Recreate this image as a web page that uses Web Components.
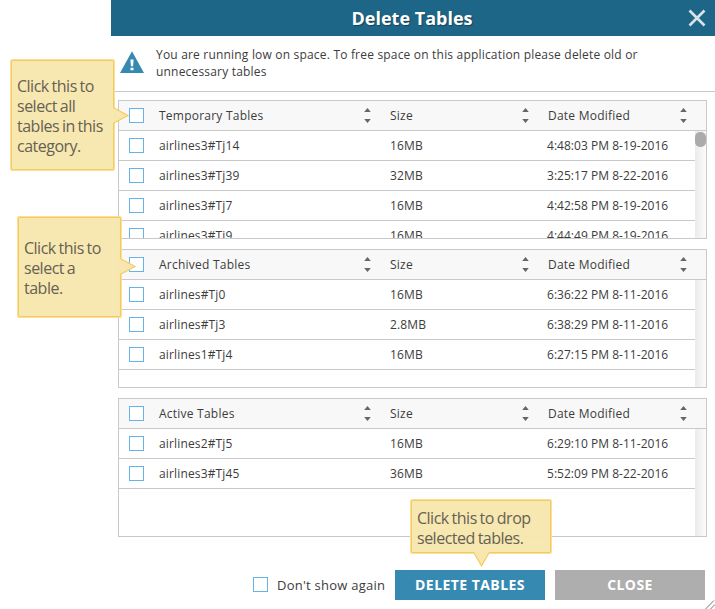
<!DOCTYPE html>
<html lang="en">
<head>
<meta charset="utf-8">
<title>Delete Tables</title>
<style>
html,body{margin:0;width:715px;height:609px;overflow:hidden;background:#fff;font-family:"Open Sans","Noto Sans",sans-serif;color:#3c3c3c}
</style>
</head>
<body>
<delete-page></delete-page>
<script>
const define = (name, html, setup) => {
  const t = document.createElement('template');
  t.innerHTML = html;
  customElements.define(name, class extends HTMLElement {
    constructor(){ super(); this.attachShadow({mode:'open'}).append(t.content.cloneNode(true)); }
    connectedCallback(){ if (setup) setup(this, this.shadowRoot); }
  });
};

define('check-box', `<style>
:host{display:block;box-sizing:border-box;width:16px;height:16px;padding:0 1px 1px 0}
span{display:block;box-sizing:border-box;width:15px;height:15px;border:1px solid #68b2e6;background:#fff}
</style><span></span>`);

define('sort-arrows', `<style>:host{display:block;width:7px;height:15px}svg{display:block}</style>
<svg width="7" height="15" viewBox="0 0 7 15"><path d="M3.5 0 6.8 4H.2zM3.5 15 6.8 11H.2z" fill="#666"/></svg>`);

define('dialog-header', `<style>
:host{display:flex;height:36px;background:#1e6688;color:#fff;align-items:center;justify-content:center;box-sizing:border-box;padding-left:25px}
h1{margin:0 auto;font:700 18px/36px "Open Sans",sans-serif;text-shadow:1px 1px 1px rgba(0,0,0,.35);white-space:nowrap}
svg{display:block;flex:none;margin-right:9px}
</style><h1><slot></slot></h1>
<svg width="18" height="18" viewBox="0 0 18 18"><path d="M1.5 1.5l15 15M16.5 1.5l-15 15" stroke="#d6e4ea" stroke-width="2.7"/></svg>`);

define('low-space-notice', `<style>
:host{display:flex;box-sizing:border-box;height:56px;border-bottom:1px solid #c9c9c9;padding:10px 0 0 9px}
svg{display:block;flex:none;margin-top:5px}
p{margin:0 0 0 12px;font-size:12px;line-height:17px;font-weight:500;letter-spacing:.19px;white-space:nowrap}
</style>
<svg width="24" height="23" viewBox="0 0 24 23"><path d="M12 .3 24 22H0z" fill="#368ab2"/><path d="M10.4 8.5h3.2l-.5 6.8h-2.2zM10.5 16.7h3v2.6h-3z" fill="#fff"/></svg>
<p><slot></slot></p>`);

define('table-row', `<style>
:host{display:grid;grid-template-columns:40px 231px 157px 1fr;box-sizing:border-box;height:30px;align-items:center;border-bottom:1px solid #c9c9c9;font-size:12px;line-height:17px;font-weight:500;white-space:nowrap;letter-spacing:.15px}
check-box{margin-left:10px}
:host(:not([heading])) div:last-child{letter-spacing:.03px}
:host([heading]){background:#f8f8f8;letter-spacing:.23px;grid-template-columns:40px 205px 26px 132px 26px 132px 1fr}
</style><check-box></check-box>`, (el, root) => {
  if (root.querySelector('div')) return;
  const heading = el.hasAttribute('heading');
  for (const v of el.getAttribute('cells').split('|')) {
    const d = document.createElement('div');
    d.textContent = v;
    root.append(d);
    if (heading) root.append(document.createElement('sort-arrows'));
  }
});

define('table-panel', `<style>
:host{display:flex;flex-direction:column;box-sizing:border-box;width:589px;height:139px;border:1px solid #c9c9c9;overflow:hidden}
.body{display:flex;flex:1;min-height:0;overflow:hidden}
.rows{flex:1;overflow:hidden}
.track{width:11px;background:linear-gradient(90deg,#ebebeb,#fbfbfb);padding-top:1px}
:host([scrollable]) .track::before{content:"";display:block;height:15px;border-radius:5px;background:#ababab}
</style><slot name="head"></slot><div class="body"><div class="rows"><slot></slot></div><div class="track"></div></div>`);

define('action-button', `<style>
:host{display:block;width:150px;height:30px;background:#aeaeae;color:#fff;text-align:center;font-weight:700;font-size:14px;line-height:30px;letter-spacing:.44px;white-space:nowrap}
:host([primary]){background:#368ab2}
</style><slot></slot>`);

define('help-callout', `<style>
:host{position:absolute;display:flex;align-items:center;box-sizing:border-box;border:1px solid #f4cb5e;border-radius:1px;background:rgba(247,231,174,.96);padding:2px 5px 0;font-size:16px;line-height:20px;color:#666152;white-space:nowrap;letter-spacing:-.5px;word-spacing:-.8px;box-shadow:0 0 0 1px #f9df97}
:host([down]){padding-top:3px}
svg{position:absolute;overflow:visible}
.right{left:100%}
.down{top:100%;display:none}
:host([down]) .down{display:block}:host([down]) .right{display:none}
</style><span><slot></slot></span>
<svg class="right" width="16" height="15"><path d="M0 0 15 7.5 0 15z" fill="#f7e7ae"/><path d="M1 0 15 7.5 1 15" fill="none" stroke="#f4cb5e" stroke-width="1.2"/></svg>
<svg class="down" width="15" height="15"><path d="M0 0 7.5 14 15 0z" fill="#f7e7ae"/><path d="M0 1 7.5 13.7 15 1" fill="none" stroke="#f4cb5e" stroke-width="1.2"/></svg>`,
(el, root) => {
  const at = parseFloat(el.getAttribute('tip'));
  root.querySelector('.right').style.top = at + 'px';
  root.querySelector('.down').style.left = at + 'px';
});

define('delete-page', `<style>
:host{display:block;position:relative;width:715px;height:609px;overflow:hidden}
main{margin-left:111px;width:604px}
.tables{display:grid;gap:10px;padding:8px 0 0 7px}
footer{display:flex;align-items:flex-start;padding:33px 0 0 142px}
footer check-box{margin-top:7px}
.again{width:118px;margin-left:8px;font-size:13px;line-height:30px;font-weight:500;letter-spacing:.25px;white-space:nowrap}
action-button+action-button{margin-left:10px}
.c1{left:11px;top:60px;width:103px;height:110px}
.c2{left:18px;top:217px;width:103px;height:100px}
.c3{left:411px;top:500px;width:140px;height:53px}
.grip{position:absolute;right:0;bottom:0}
</style>
<main>
<dialog-header>Delete Tables</dialog-header>
<low-space-notice>You are running low on space. To free space on this application please delete old or<br>unnecessary tables</low-space-notice>
<div class="tables">
<table-panel scrollable>
<table-row slot="head" heading cells="Temporary Tables|Size|Date Modified"></table-row>
<table-row cells="airlines3#Tj14|16MB|4:48:03 PM 8-19-2016"></table-row>
<table-row cells="airlines3#Tj39|32MB|3:25:17 PM 8-22-2016"></table-row>
<table-row cells="airlines3#Tj7|16MB|4:42:58 PM 8-19-2016"></table-row>
<table-row cells="airlines3#Tj9|16MB|4:44:49 PM 8-19-2016"></table-row>
</table-panel>
<table-panel>
<table-row slot="head" heading cells="Archived Tables|Size|Date Modified"></table-row>
<table-row cells="airlines#Tj0|16MB|6:36:22 PM 8-11-2016"></table-row>
<table-row cells="airlines#Tj3|2.8MB|6:38:29 PM 8-11-2016"></table-row>
<table-row cells="airlines1#Tj4|16MB|6:27:15 PM 8-11-2016"></table-row>
</table-panel>
<table-panel>
<table-row slot="head" heading cells="Active Tables|Size|Date Modified"></table-row>
<table-row cells="airlines2#Tj5|16MB|6:29:10 PM 8-11-2016"></table-row>
<table-row cells="airlines3#Tj45|36MB|5:52:09 PM 8-22-2016"></table-row>
</table-panel>
</div>
<footer><check-box></check-box><span class="again">Don't show again</span><action-button primary>DELETE TABLES</action-button><action-button>CLOSE</action-button></footer>
</main>
<help-callout class="c1" tip="46.5">Click this to<br>select all<br>tables in this<br>category.</help-callout>
<help-callout class="c2" tip="40.5">Click this to<br>select a<br>table.</help-callout>
<help-callout class="c3" down tip="61.5">Click this to drop<br>selected tables.</help-callout>
<svg class="grip" width="11" height="9" viewBox="0 0 11 9"><path d="M1 9.5 10 .5M6 9.5l5-5" stroke="#777" fill="none"/></svg>`);
</script>
</body>
</html>
